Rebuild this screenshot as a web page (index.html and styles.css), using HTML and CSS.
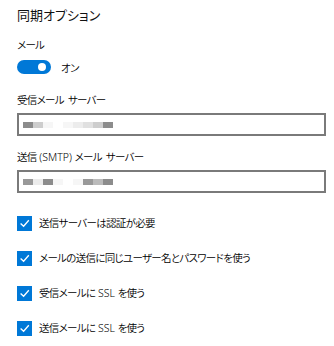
FILE: index.html
```html
<!doctype html>
<html lang="ja">
<head>
  <meta charset="utf-8">
  <title>同期オプション</title>
  <link rel="stylesheet" href="styles.css">
</head>
<body>
<div class="syncOptions">
  <h1 class="title">同期オプション</h1>

  <div class="fieldLabel">メール</div>
  <div class="toggleRow">
    <span class="toggle"><span class="toggleKnob"></span></span>
    <span class="toggleText">オン</span>
  </div>

  <div class="fieldLabel serverLabel">受信メール サーバー</div>
  <div class="serverInput">
    <span class="blur b1"></span><span class="blur b2"></span><span class="blur b3"></span><span class="blur b0"></span><span class="blur b3"></span><span class="blur b4"></span><span class="blur b5"></span><span class="blur b2"></span><span class="blur b1"></span>
  </div>

  <div class="fieldLabel serverLabel second">送信<span class="latin"> (SMTP) </span>メール サーバー</div>
  <div class="serverInput">
    <span class="blur b6"></span><span class="blur b4"></span><span class="blur b1"></span><span class="blur b3"></span><span class="blur b0"></span><span class="blur b3"></span><span class="blur b6"></span><span class="blur b7"></span><span class="blur b1"></span>
  </div>

  <ul class="checkList">
    <li class="checkItem">
      <span class="checkBox"><svg viewBox="0 0 15 15"><polyline points="3.6,7.4 6.6,10.2 11.8,4.2"/></svg></span>
      <span>送信サーバーは認証が必要</span>
    </li>
    <li class="checkItem">
      <span class="checkBox"><svg viewBox="0 0 15 15"><polyline points="3.6,7.4 6.6,10.2 11.8,4.2"/></svg></span>
      <span>メールの送信に同じユーザー名とパスワードを使う</span>
    </li>
    <li class="checkItem">
      <span class="checkBox"><svg viewBox="0 0 15 15"><polyline points="3.6,7.4 6.6,10.2 11.8,4.2"/></svg></span>
      <span>受信メールに<span class="latin"> SSL </span>を使う</span>
    </li>
    <li class="checkItem">
      <span class="checkBox"><svg viewBox="0 0 15 15"><polyline points="3.6,7.4 6.6,10.2 11.8,4.2"/></svg></span>
      <span>送信メールに<span class="latin"> SSL </span>を使う</span>
    </li>
  </ul>
</div>
</body>
</html>
```

FILE: styles.css
```css
body {
  margin: 0;
  background-color: #fff;
  color: #000;
  font-family: "Noto Sans", "Noto Sans CJK JP", sans-serif;
  font-feature-settings: "palt";
  font-size: 10.5px;
  font-weight: 350;
  letter-spacing: -0.7px;
  word-spacing: 2px;
}

.latin {
  letter-spacing: 0;
  word-spacing: 0;
}

.syncOptions {
  padding: 5px 8px 0 17px;
}

.title {
  margin: 0;
  font-size: 13px;
  font-weight: 400;
  letter-spacing: 0;
  line-height: 20px;
  color: #111;
}

.fieldLabel {
  margin-top: 10px;
  line-height: 20px;
}

.toggleRow {
  display: flex;
  align-items: center;
  height: 20px;
  margin-top: 2px;
}

.toggle {
  position: relative;
  width: 34px;
  height: 14px;
  border-radius: 7px;
  background-color: #0078d7;
}

.toggleKnob {
  position: absolute;
  top: 3px;
  right: 5px;
  width: 8px;
  height: 8px;
  border-radius: 50%;
  background-color: #fff;
}

.toggleText {
  margin-left: 10px;
}

.serverLabel {
  margin-top: 13px;
}

.serverLabel.second {
  margin-top: 11px;
}

.serverInput {
  display: flex;
  align-items: center;
  box-sizing: border-box;
  height: 23px;
  margin-top: 3px;
  padding-left: 4px;
  border: 2px solid #7a7a7a;
  background-color: #fff;
}

.blur {
  width: 10px;
  height: 6px;
}

.b0 { background-color: #fff; }
.b1 { background-color: #8c8c8c; }
.b2 { background-color: #cdcdcd; }
.b3 { background-color: #f6f6f6; }
.b4 { background-color: #ececec; }
.b5 { background-color: #e0e0e0; }
.b6 { background-color: #999; }
.b7 { background-color: #bbb; }

.checkList {
  margin: 20px 0 0;
  padding: 0;
  list-style: none;
}

.checkItem {
  display: flex;
  align-items: center;
  height: 20px;
  margin-bottom: 15px;
  line-height: 20px;
  white-space: pre;
}

.checkBox {
  display: inline-block;
  flex: none;
  width: 15px;
  height: 15px;
  margin-right: 7px;
  background-color: #0078d7;
}

.checkBox svg {
  display: block;
  width: 15px;
  height: 15px;
}

.checkBox polyline {
  fill: none;
  stroke: #fff;
  stroke-width: 1.3;
}
```
